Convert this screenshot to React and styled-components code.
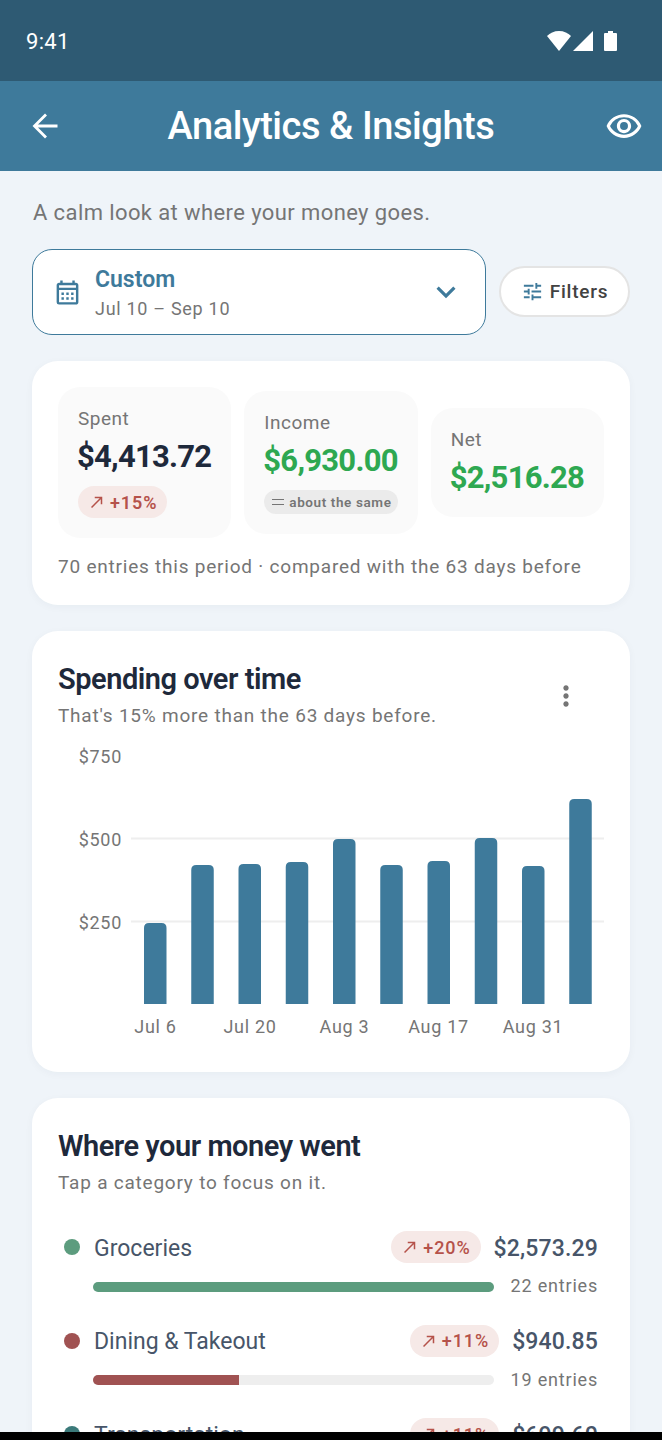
import { createGlobalStyle, styled } from 'styled-components';
import {
  MdOutlineRemoveRedEye,
  MdOutlineCalendarMonth,
  MdKeyboardArrowDown,
  MdTune,
  MdMoreVert,
  MdNorthEast,
} from 'react-icons/md';

const bars = [
  { top: 923 },
  { top: 865 },
  { top: 864 },
  { top: 862 },
  { top: 839 },
  { top: 865 },
  { top: 861 },
  { top: 838 },
  { top: 866 },
  { top: 799 },
];

const yLabels = [
  { label: '$750', y: 757 },
  { label: '$500', y: 840 },
  { label: '$250', y: 923 },
];

const xLabels = [
  { label: 'Jul 6', x: 155.5 },
  { label: 'Jul 20', x: 250 },
  { label: 'Aug 3', x: 344.5 },
  { label: 'Aug 17', x: 438.5 },
  { label: 'Aug 31', x: 533 },
];

const categories = [
  { name: 'Groceries', color: '#5c9c7e', change: '+20%', amount: '$2,573.29', entries: '22 entries', pct: 100 },
  { name: 'Dining & Takeout', color: '#a05252', change: '+11%', amount: '$940.85', entries: '19 entries', pct: 36.5 },
  { name: 'Transportation', color: '#3b7a7a', change: '+11%', amount: '$699.60', entries: '12 entries', pct: 27 },
];

const SpendChart = () => {
  // svg coords are page coords minus the chart's origin (58, 745)
  const ox = 58;
  const oy = 745;
  return (
    <ChartSvg width="546" height="305" viewBox="0 0 546 305">
      {[838.5, 921.5].map(y => (
        <line key={y} x1={131 - ox} x2={604 - ox} y1={y - oy} y2={y - oy} stroke="#eeeeee" strokeWidth="2" />
      ))}
      {bars.map((b, i) => {
        const x = 144 + i * 47.25 - ox;
        const y = b.top - oy;
        const bottom = 1004 - oy;
        return (
          <path
            key={i}
            d={`M${x} ${bottom}V${y + 5}Q${x} ${y} ${x + 5} ${y}H${x + 17.5}Q${x + 22.5} ${y} ${x + 22.5} ${y + 5}V${bottom}Z`}
            fill="#3e7a9b"
          />
        );
      })}
      {yLabels.map(l => (
        <ChartText key={l.label} x={122 - ox} y={l.y - oy + 6} textAnchor="end">
          {l.label}
        </ChartText>
      ))}
      {xLabels.map(l => (
        <ChartText key={l.label} x={l.x - ox} y={1033 - oy} textAnchor="middle">
          {l.label}
        </ChartText>
      ))}
    </ChartSvg>
  );
};

const Trend = ({ value, strong }) => (
  <TrendPill $strong={strong}>
    <MdNorthEast size={18} />
    <span>{value}</span>
  </TrendPill>
);

export default function App() {
  return (
    <Page>
      <GlobalStyle />
      <Screen>
        <StatusBar>
          <Clock>9:41</Clock>
          <svg width="70" height="20" viewBox="0 0 70 20">
            <path d="M0 5C3 2 7 0 12 0S21 2 24 5L12 20Z" fill="#fff" />
            <path d="M46 0V20H26Z" fill="#fff" />
            <path d="M57 3Q57 2 58 2H61V0H66V2H69Q70 2 70 3V19Q70 20 69 20H58Q57 20 57 19Z" fill="#fff" />
          </svg>
        </StatusBar>
        <AppBar>
          <BarSlot>
            <svg width="26" height="26" viewBox="0 0 26 26" fill="none" stroke="#fff" strokeWidth="2.8">
              <path d="M25.5 13H2.5M14 1.5L2.5 13L14 24.5" />
            </svg>
          </BarSlot>
          <AppTitle>Analytics &amp; Insights</AppTitle>
          <BarSlot $end>
            <MdOutlineRemoveRedEye size={38} />
          </BarSlot>
        </AppBar>
        <Content>
          <Intro>A calm look at where your money goes.</Intro>
          <FilterRow>
            <RangeSelect>
              <MdOutlineCalendarMonth size={29} color="#3e7a9b" />
              <RangeText>
                <RangeName>Custom</RangeName>
                <RangeDates>Jul 10 – Sep 10</RangeDates>
              </RangeText>
              <MdKeyboardArrowDown size={38} color="#3e7a9b" />
            </RangeSelect>
            <FilterButton>
              <MdTune size={23} color="#3e7a9b" />
              Filters
            </FilterButton>
          </FilterRow>

          <Card $pb={26}>
            <StatRow>
              <StatBox>
                <StatLabel>Spent</StatLabel>
                <StatValue>$4,413.72</StatValue>
                <Trend value="+15%" strong />
              </StatBox>
              <StatBox>
                <StatLabel>Income</StatLabel>
                <StatValue $green>$6,930.00</StatValue>
                <SamePill>
                  <EqualsMark />
                  about the same
                </SamePill>
              </StatBox>
              <StatBox>
                <StatLabel>Net</StatLabel>
                <StatValue $green>$2,516.28</StatValue>
              </StatBox>
            </StatRow>
            <Footnote>70 entries this period · compared with the 63 days before</Footnote>
          </Card>

          <Card $pb={22}>
            <CardHead>
              <div>
                <CardTitle>Spending over time</CardTitle>
                <CardSub>That's 15% more than the 63 days before.</CardSub>
              </div>
              <MoreButton>
                <MdMoreVert size={32} />
              </MoreButton>
            </CardHead>
            <SpendChart />
          </Card>

          <Card $pb={26}>
            <CardTitle>Where your money went</CardTitle>
            <CardSub>Tap a category to focus on it.</CardSub>
            <CategoryList>
              {categories.map(c => (
                <Category key={c.name}>
                  <CategoryTop>
                    <Dot $color={c.color} />
                    <CategoryName>{c.name}</CategoryName>
                    <Trend value={c.change} />
                    <Amount>{c.amount}</Amount>
                  </CategoryTop>
                  <CategoryBottom>
                    <BarTrack>
                      <BarFill $color={c.color} style={{ width: `${c.pct}%` }} />
                    </BarTrack>
                    <Entries>{c.entries}</Entries>
                  </CategoryBottom>
                </Category>
              ))}
            </CategoryList>
          </Card>
        </Content>
      </Screen>
      <NavStrip />
    </Page>
  );
}

const GlobalStyle = createGlobalStyle`
  html, body {
    margin: 0;
    padding: 0;
    background: #000;
  }
  * {
    box-sizing: border-box;
  }
  body {
    font-family: Roboto, 'Liberation Sans', sans-serif;
  }
`;

const Page = styled.div`
  display: flex;
  flex-direction: column;
  width: 662px;
  height: 1440px;
  overflow: hidden;
`;

const Screen = styled.div`
  flex: 1;
  min-height: 0;
  overflow: hidden;
  background: #eff4f9;
`;

const NavStrip = styled.div`
  height: 8px;
  flex: none;
  background: #000;
`;

const StatusBar = styled.div`
  display: flex;
  align-items: center;
  justify-content: space-between;
  height: 81px;
  padding: 0 45px 0 26px;
  background: #2e5a73;
  color: #fff;
`;

const Clock = styled.span`
  margin-top: 2px;
  font-size: 22px;
  letter-spacing: 0.3px;
`;

const AppBar = styled.header`
  display: flex;
  align-items: center;
  justify-content: space-between;
  height: 90px;
  padding: 0 19px;
  background: #3e7a9b;
  color: #fff;
`;

const BarSlot = styled.div`
  display: flex;
  justify-content: ${p => (p.$end ? 'flex-end' : 'flex-start')};
  width: 52px;
  padding-left: ${p => (p.$end ? 0 : 13)}px;
`;

const AppTitle = styled.h1`
  margin: 0;
  font-size: 38px;
  font-weight: 500;
  letter-spacing: -0.45px;
`;

const Content = styled.main`
  display: flex;
  flex-direction: column;
  padding: 29px 32px 0;
`;

const Intro = styled.p`
  margin: 0 0 0 1px;
  font-size: 22px;
  line-height: 26px;
  letter-spacing: 0.4px;
  color: #757575;
`;

const FilterRow = styled.div`
  display: flex;
  align-items: center;
  gap: 13px;
  margin: 23px 0 26px;
`;

const RangeSelect = styled.div`
  display: flex;
  align-items: center;
  flex: none;
  width: 454px;
  height: 86px;
  padding: 0 20px;
  background: #fff;
  border: 1.5px solid #3e7a9b;
  border-radius: 20px;
`;

const RangeText = styled.div`
  display: flex;
  flex-direction: column;
  flex: 1;
  gap: 5px;
  margin-left: 13px;
`;

const RangeName = styled.span`
  font-size: 23px;
  font-weight: 600;
  color: #3e7a9b;
`;

const RangeDates = styled.span`
  font-size: 18px;
  letter-spacing: 0.7px;
  color: #757575;
`;

const FilterButton = styled.button`
  display: flex;
  align-items: center;
  justify-content: center;
  gap: 6px;
  width: 131px;
  height: 51px;
  margin-bottom: 1px;
  padding: 0;
  background: #fff;
  border: 2px solid #e4e4e4;
  border-radius: 26px;
  font-family: inherit;
  font-size: 19px;
  font-weight: 500;
  letter-spacing: 0.8px;
  color: #424242;
`;

const Card = styled.section`
  margin-bottom: 26px;
  padding: 26px 26px ${p => p.$pb}px;
  background: #fff;
  border-radius: 26px;
  box-shadow: 0 2px 8px rgba(30, 50, 70, 0.04);
`;

const StatRow = styled.div`
  display: flex;
  align-items: center;
  gap: 13px;
`;

const StatBox = styled.div`
  flex: 1;
  min-width: 0;
  padding: 20px;
  background: #fafafa;
  border-radius: 22px;
`;

const StatLabel = styled.div`
  font-size: 19px;
  line-height: 24px;
  letter-spacing: 0.5px;
  color: #757575;
`;

const StatValue = styled.div`
  margin: 7px 0 0 -1px;
  font-size: 31px;
  line-height: 38px;
  font-weight: 700;
  letter-spacing: -0.75px;
  white-space: nowrap;
  color: ${p => (p.$green ? '#2ea851' : '#1e293b')};
`;

const TrendPill = styled.div`
  display: inline-flex;
  align-items: center;
  gap: 4px;
  flex: none;
  height: 32px;
  padding: 0 10px;
  border-radius: 16px;
  background: #f6e9e7;
  color: #b5524a;
  font-size: 18px;
  font-weight: ${p => (p.$strong ? 600 : 500)};
  letter-spacing: 0.9px;

  ${StatBox} & {
    margin-top: 10px;
  }
`;

const SamePill = styled.div`
  display: flex;
  align-items: center;
  gap: 5px;
  height: 24px;
  margin-top: 10px;
  padding: 0 7px 0 8px;
  border-radius: 12px;
  background: #ebebeb;
  color: #757575;
  font-size: 13.5px;
  font-weight: 600;
  letter-spacing: 0.6px;
  white-space: nowrap;
`;

const EqualsMark = styled.span`
  flex: none;
  width: 12px;
  height: 6px;
  border-top: 1.5px solid #757575;
  border-bottom: 1.5px solid #757575;
`;

const Footnote = styled.p`
  margin: 17px 0 0;
  font-size: 19px;
  line-height: 24px;
  letter-spacing: 0.78px;
  color: #757575;
`;

const CardHead = styled.div`
  display: flex;
  align-items: flex-start;
  justify-content: space-between;
`;

const CardTitle = styled.h2`
  margin: 0 0 3px;
  font-size: 29px;
  line-height: 44px;
  font-weight: 600;
  letter-spacing: -0.48px;
  color: #1e293b;
`;

const CardSub = styled.p`
  margin: 0;
  font-size: 19px;
  line-height: 24px;
  letter-spacing: 0.78px;
  color: #757575;
`;

const MoreButton = styled.div`
  display: flex;
  margin: 23px 22px 0 0;
  color: #757575;
`;

const ChartSvg = styled.svg`
  display: block;
  margin-top: 17px;
`;

const ChartText = styled.text`
  font-family: Roboto, sans-serif;
  font-size: 18px;
  letter-spacing: 0.7px;
  fill: #757575;
`;

const CategoryList = styled.div`
  display: flex;
  flex-direction: column;
  gap: 27.5px;
  margin-top: 36px;
  padding: 0 6px;
`;

const Category = styled.div`
  display: flex;
  flex-direction: column;
`;

const CategoryTop = styled.div`
  display: flex;
  align-items: center;
  height: 32px;
`;

const Dot = styled.span`
  flex: none;
  width: 16px;
  height: 16px;
  margin-right: 14px;
  border-radius: 50%;
  background: ${p => p.$color};
`;

const CategoryName = styled.span`
  flex: 1;
  margin-top: 2px;
  font-size: 23px;
  color: #475569;
`;

const Amount = styled.span`
  margin: 2px 0 0 13px;
  font-size: 23px;
  font-weight: 500;
  letter-spacing: 0.15px;
  color: #475569;
`;

const CategoryBottom = styled.div`
  display: flex;
  align-items: center;
  gap: 17px;
  height: 21px;
  margin-top: 13px;
  padding-left: 29px;
`;

const BarTrack = styled.div`
  flex: 1;
  height: 10px;
  overflow: hidden;
  border-radius: 5px;
  background: #eeeeee;
`;

const BarFill = styled.div`
  height: 100%;
  background: ${p => p.$color};
`;

const Entries = styled.span`
  margin-bottom: 2px;
  font-size: 18px;
  letter-spacing: 0.8px;
  color: #757575;
`;
